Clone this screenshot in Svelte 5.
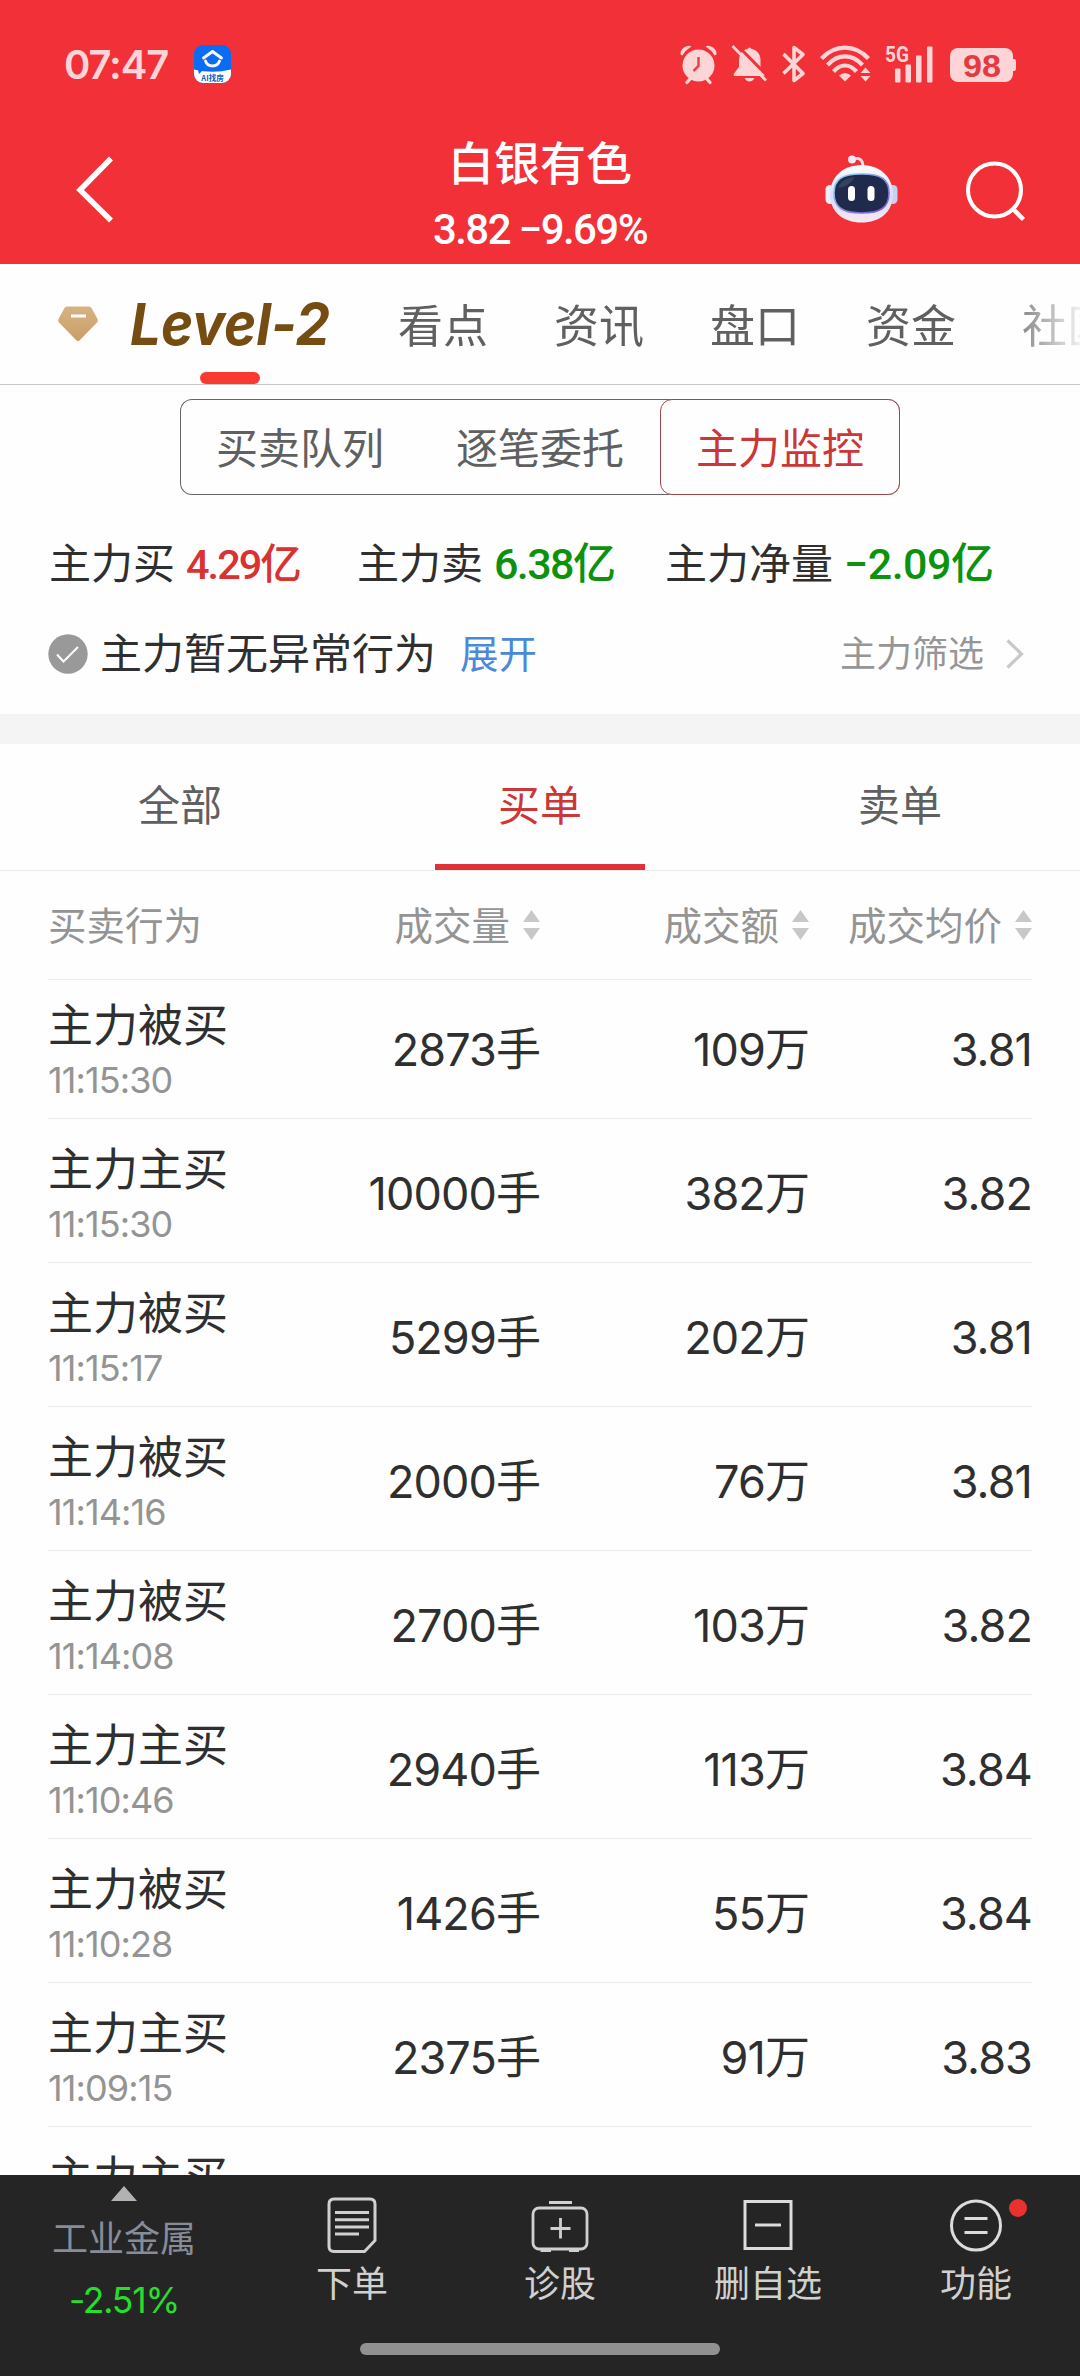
<script lang="ts">
  // Level-2 main force monitor for a single stock
  const quote = { name: '白银有色', price: '3.82', change: '−9.69%' };

  const navTabs = ['看点', '资讯', '盘口', '资金', '社区'];
  const segments = ['买卖队列', '逐笔委托', '主力监控'];
  const orderTabs = ['全部', '买单', '卖单'];

  const stats = [
    { label: '主力买', value: '4.29亿', cls: 'up' },
    { label: '主力卖', value: '6.38亿', cls: 'down' },
    { label: '主力净量', value: '−2.09亿', cls: 'down net' }
  ];

  const columns = ['成交量', '成交额', '成交均价'];

  const rows = [
    { action: '主力被买', time: '11:15:30', volume: '2873手', amount: '109万', price: '3.81' },
    { action: '主力主买', time: '11:15:30', volume: '10000手', amount: '382万', price: '3.82' },
    { action: '主力被买', time: '11:15:17', volume: '5299手', amount: '202万', price: '3.81' },
    { action: '主力被买', time: '11:14:16', volume: '2000手', amount: '76万', price: '3.81' },
    { action: '主力被买', time: '11:14:08', volume: '2700手', amount: '103万', price: '3.82' },
    { action: '主力主买', time: '11:10:46', volume: '2940手', amount: '113万', price: '3.84' },
    { action: '主力被买', time: '11:10:28', volume: '1426手', amount: '55万', price: '3.84' },
    { action: '主力主买', time: '11:09:15', volume: '2375手', amount: '91万', price: '3.83' },
    { action: '主力主买', time: '', volume: '', amount: '', price: '' }
  ];

  let segment = $state(2);
  let orderTab = $state(1);
</script>

<div class="page">
  <header>
    <div class="status">
      <span class="clock">07:47</span>
      <svg class="app" width="37" height="38" viewBox="0 0 37 38">
        <clipPath id="appClip"><rect width="37" height="38" rx="9" /></clipPath>
        <g clip-path="url(#appClip)">
          <rect width="37" height="38" fill="#0a6cf5" />
          <path d="M0 24.5 Q18.5 29 37 24.5 V38 H0Z" fill="#fff" />
          <path d="M4 25 h5 l-4 4z" fill="#0a6cf5" />
          <path d="M9.5 13 L18.5 6.5 L27.5 13" fill="none" stroke="#fff" stroke-width="2.8" stroke-linecap="round" stroke-linejoin="round" />
          <path d="M11.5 16 A7.4 7.4 0 0 0 25.5 16" fill="none" stroke="#fff" stroke-width="2.8" stroke-linecap="round" />
          <text x="18.5" y="35.5" text-anchor="middle" font-size="7.5" font-weight="700" fill="#0a5cc0">AI找房</text>
        </g>
      </svg>
      <div class="sys">
        <!-- alarm -->
        <svg width="38" height="38" viewBox="0 0 38 38">
          <g fill="#fdd5d7">
            <path d="M0.5 9.5 Q0 5.5 4 2.5 Q8 -0.5 11.5 1.5 Q5.5 5 2.5 10.5Z" />
            <path d="M36.5 9.5 Q37 5.5 33 2.5 Q29 -0.5 25.5 1.5 Q31.5 5 34.5 10.5Z" />
            <circle cx="18.5" cy="20.5" r="16" />
          </g>
          <path d="M10 34 L7 37.5 M27 34 L30 37.5" stroke="#fdd5d7" stroke-width="3.4" stroke-linecap="round" />
          <path d="M18.5 12 V21 L13.5 26" fill="none" stroke="#e9434a" stroke-width="2.5" />
        </svg>
        <!-- muted bell -->
        <svg width="36" height="38" viewBox="0 0 36 38">
          <path d="M7 16 C7 9 10 5 15.5 4 Q17.5 1 19.5 4 C25 5 28.5 9 28.5 15 V22 L33 29 Q33.5 31 31 31 H3 Q1 31 2 28.5 L7 22Z" fill="#fdd5d7" />
          <path d="M12.5 33 H22.5 Q20.5 36.5 17.5 36.5 T12.5 33Z" fill="#fdd5d7" />
          <path d="M3.5 -1.5 L38 33.5" stroke="#f13037" stroke-width="3" />
          <path d="M0.5 1 L34 35.5" stroke="#fdd5d7" stroke-width="2.8" />
        </svg>
        <!-- bluetooth -->
        <svg width="24" height="38" viewBox="0 0 24 38">
          <path d="M1.5 9 L21 28.5 L12 35.5 V2.5 L21 9.5 L1.5 28.5" fill="none" stroke="#fdd5d7" stroke-width="3.6" stroke-linejoin="round" />
        </svg>
        <!-- wifi -->
        <svg width="52" height="38" viewBox="0 0 52 38">
          <g fill="none" stroke="#fdd5d7" stroke-width="4.2">
            <path d="M1.5 13.5 C15 -1 35 -1 48.5 13.5" />
            <path d="M7.5 20 C18 8.5 32 8.5 42.5 20" />
            <path d="M13.5 26.5 C20.5 18.5 29.5 18.5 36.5 26.5" />
          </g>
          <path d="M19 30.5 Q25 25.5 31 30.5 L25 36.5Z" fill="#fdd5d7" />
          <path d="M40.5 28 L45.5 22.5 L50.5 28Z M40.5 31 L45.5 36.5 L50.5 31Z" fill="#fdd5d7" />
        </svg>
        <!-- mobile signal -->
        <svg width="50" height="38" viewBox="0 0 50 38">
          <text x="-1" y="16.5" font-size="22.5" font-weight="700" textLength="24" lengthAdjust="spacingAndGlyphs" fill="#fdd5d7" font-family="Roboto, sans-serif">5G</text>
          <g fill="#fdd5d7">
            <rect x="9" y="23.5" width="5.5" height="14" rx="1" />
            <rect x="19.5" y="19.5" width="5.5" height="18" rx="1" />
            <rect x="30" y="10.5" width="5.5" height="27" rx="1" />
            <rect x="41" y="1.5" width="5.5" height="36" rx="1" />
          </g>
        </svg>
        <!-- battery -->
        <svg width="66" height="38" viewBox="0 0 66 38">
          <rect y="3" width="63" height="34" rx="8" fill="#fdd5d7" />
          <path d="M63 14 h1 q2 0 2 2 v8 q0 2 -2 2 h-1z" fill="#fdd5d7" />
          <text x="32" y="31.5" text-anchor="middle" font-size="32" font-weight="700" textLength="38" lengthAdjust="spacingAndGlyphs" fill="#e23c42" font-family="'Liberation Sans', sans-serif">98</text>
        </svg>
      </div>
    </div>

    <div class="nav">
      <svg class="back" width="40" height="72" viewBox="0 0 40 72">
        <path d="M36 5.5 L5 37 L36 67.5" fill="none" stroke="#fff" stroke-width="5.5" />
      </svg>
      <div class="title">
        <div class="name">{quote.name}</div>
        <div class="price">{quote.price} {quote.change}</div>
      </div>
      <div class="tools">
        <!-- assistant robot -->
        <svg width="73" height="68" viewBox="0 0 73 68">
          <defs>
            <linearGradient id="shell" x1="0" y1="0" x2="0" y2="1">
              <stop offset="0" stop-color="#ffffff" />
              <stop offset="0.55" stop-color="#d6dcf8" />
              <stop offset="1" stop-color="#f7e8f4" />
            </linearGradient>
            <linearGradient id="rim" x1="0" y1="0" x2="1" y2="1">
              <stop offset="0" stop-color="#8fdcf0" />
              <stop offset="1" stop-color="#7a4fd0" />
            </linearGradient>
          </defs>
          <path d="M27 4 Q38 1 38 12" fill="none" stroke="#f6dfea" stroke-width="2.8" />
          <circle cx="27" cy="4.5" r="4" fill="#f8e6f0" />
          <rect x="0.5" y="30" width="9" height="19" rx="4.5" fill="#f2edfb" />
          <rect x="63.5" y="30" width="9" height="19" rx="4.5" fill="#cbd0f0" />
          <path d="M36.5 10 C57 10 68 24 68 39 C68 57 55 67.5 36.5 67.5 C18 67.5 5 57 5 39 C5 24 16 10 36.5 10Z" fill="url(#shell)" />
          <path d="M36.5 19 C56 19 64 24 64 38 C64 52 56 58 36.5 58 C17 58 9 52 9 38 C9 24 17 19 36.5 19Z" fill="#1f2a4d" stroke="url(#rim)" stroke-width="1.6" />
          <path d="M13 33 Q16 23 30 22 Q24 32 13 33Z" fill="#46506e" opacity="0.6" />
          <rect x="23" y="31" width="7" height="15" rx="3.5" fill="#fff" />
          <rect x="42.5" y="31" width="7" height="15" rx="3.5" fill="#fff" />
        </svg>
        <svg width="62" height="62" viewBox="0 0 62 62">
          <circle cx="29.5" cy="30" r="26.5" fill="none" stroke="#fff" stroke-width="4" />
          <path d="M48 49 L58.5 59.5" stroke="#fff" stroke-width="4.5" />
        </svg>
      </div>
    </div>
  </header>

  <nav class="tabs">
    <svg class="gem" width="40" height="36" viewBox="0 0 40 36">
      <defs>
        <linearGradient id="gold" x1="0" y1="0" x2="0" y2="1">
          <stop offset="0" stop-color="#d6b283" />
          <stop offset="1" stop-color="#c99f66" />
        </linearGradient>
      </defs>
      <path d="M9 0.5 H31 Q32.5 0.5 33.5 2 L39.5 13 Q40.5 15 39 16.5 L21.5 34.5 Q20 36 18.5 34.5 L1 16.5 Q-0.5 15 0.5 13 L6.5 2 Q7.5 0.5 9 0.5Z" fill="url(#gold)" />
      <rect x="13" y="8.5" width="15" height="3" fill="#fff" />
    </svg>
    <div class="level">
      <svg width="200" height="60" viewBox="0 0 200 60">
        <text x="0" y="50.5" font-family="Inter, sans-serif" font-size="58" font-weight="700" font-style="italic" textLength="200" lengthAdjust="spacingAndGlyphs" fill="#754c12">Level-2</text>
      </svg>
      <span class="mark"></span>
    </div>
    <div class="links">
      {#each navTabs as t}
        <span>{t}</span>
      {/each}
    </div>
  </nav>

  <section class="summary">
    <div class="seg">
      {#each segments as s, i}
        <button class:active={segment === i} onclick={() => (segment = i)}>{s}</button>
      {/each}
    </div>
    <div class="stats">
      {#each stats as s}
        <div>{s.label}<b class={s.cls}>{s.value}</b></div>
      {/each}
    </div>
    <div class="notice">
      <svg width="40" height="40" viewBox="0 0 40 40">
        <circle cx="20" cy="20" r="19.7" fill="#999" />
        <path d="M9 20.5 L15.5 27.5 L30 13" fill="none" stroke="#fff" stroke-width="2" />
      </svg>
      <span class="msg">主力暂无异常行为</span>
      <a href="#expand">展开</a>
      <span class="filter">主力筛选</span>
      <svg width="18" height="30" viewBox="0 0 18 30">
        <path d="M1.5 1.5 L15.5 15 L1.5 28.5" fill="none" stroke="#c8c8c8" stroke-width="3.2" />
      </svg>
    </div>
  </section>

  <div class="order-tabs">
    {#each orderTabs as t, i}
      <button class:active={orderTab === i} onclick={() => (orderTab = i)}>{t}</button>
    {/each}
  </div>

  <div class="thead grid">
    <span class="label">买卖行为</span>
    {#each columns as c}
      <span class="num">
        <span class="label">{c}</span>
        <svg width="17" height="30" viewBox="0 0 17 30">
          <path d="M8.5 0 L17 12 H0Z M8.5 30 L17 18 H0Z" fill="#c8c8c8" />
        </svg>
      </span>
    {/each}
  </div>

  <div class="list">
    {#each rows as r}
      <div class="row grid">
        <div>
          <div class="action">{r.action}</div>
          <div class="time">{r.time}</div>
        </div>
        <span class="num">{r.volume}</span>
        <span class="num">{r.amount}</span>
        <span class="num">{r.price}</span>
      </div>
    {/each}
  </div>

  <footer>
    <div class="actions">
      <div class="sector">
        <svg width="26" height="15" viewBox="0 0 26 15"><path d="M13 0 L26 15 H0Z" fill="#b2b2b2" /></svg>
        <span class="sector-name">工业金属</span>
        <span class="sector-pct">-2.51%</span>
      </div>
      <div class="item">
        <svg width="60" height="60" viewBox="0 0 60 60" fill="none" stroke="#d0d0d0" stroke-width="3">
          <path d="M12 4 H48 Q53 4 53 9 V45.5 L42.5 56.5 H12 Q7 56.5 7 51.5 V9 Q7 4 12 4Z" />
          <path d="M13 17.5 H47 M13 24.7 H47 M13 32 H47 M13 39 H37" />
        </svg>
        <span>下单</span>
      </div>
      <div class="item">
        <svg width="60" height="60" viewBox="0 0 60 60" fill="none" stroke="#d0d0d0" stroke-width="2.8">
          <rect x="3" y="13" width="54" height="41" rx="6" />
          <path d="M19 7.5 H42 M30.5 23 V43.5 M20.5 33.5 H40.5 M10.5 55.5 H21 M39 55.5 H49" />
        </svg>
        <span>诊股</span>
      </div>
      <div class="item">
        <svg width="60" height="60" viewBox="0 0 60 60" fill="none" stroke="#dcdcdc" stroke-width="3">
          <rect x="7" y="6.5" width="46" height="47" />
          <path d="M17 30 H43" />
        </svg>
        <span>删自选</span>
      </div>
      <div class="item">
        <svg width="60" height="60" viewBox="0 0 60 60" fill="none" stroke="#dcdcdc" stroke-width="3">
          <circle cx="30" cy="30.5" r="24.5" />
          <path d="M18.5 23.5 H41.5 M18.5 37.5 H41.5" />
        </svg>
        <i class="dot"></i>
        <span>功能</span>
      </div>
    </div>
    <div class="home"></div>
  </footer>
</div>

<style>
  :global(body) { margin: 0; background: #fff; }
  .page {
    width: 1080px;
    height: 2376px;
    display: flex;
    flex-direction: column;
    overflow: hidden;
    background: #fefefe;
    color: #2f2f2f;
    font-family: Inter, "Noto Sans CJK SC", sans-serif;
    font-weight: 400;
  }
  button {
    border: 0;
    padding: 0;
    background: none;
    font: inherit;
    color: inherit;
  }
  svg { display: block; flex: none; overflow: visible; }

  header {
    height: 264px;
    background: #f13037;
    color: #fff;
  }
  .status {
    height: 128px;
    display: flex;
    align-items: center;
    padding: 0 64px;
  }
  .clock {
    width: 130px;
    font-size: 40px;
    font-weight: 600;
    letter-spacing: -1.1px;
    color: #fdd5d7;
  }
  .app { font-family: "Noto Sans CJK SC", sans-serif; }
  .sys {
    margin-left: auto;
    display: flex;
    gap: 14px;
  }
  .nav {
    height: 136px;
    display: grid;
    grid-template-columns: 1fr auto 1fr;
  }
  .back { margin: 25px 0 0 75px; }
  .title { text-align: center; padding-top: 5px; }
  .name { font-size: 46px; line-height: 60px; font-weight: 500; }
  .price {
    margin-top: 9px;
    font-family: Roboto, sans-serif;
    font-size: 42px;
    line-height: 56px;
    font-weight: 500;
    letter-spacing: -1.6px;
  }
  .tools {
    display: flex;
    justify-content: flex-end;
    align-items: flex-start;
    gap: 67px;
    padding: 27px 53px 0 0;
  }
  .tools svg:last-child { margin-top: 5px; }

  .tabs {
    height: 120px;
    display: flex;
    align-items: center;
    border-bottom: 1px solid #c8c8c8;
  }
  .gem { margin-left: 58px; }
  .level {
    position: relative;
    margin-left: 32px;
    width: 200px;
  }
  .mark {
    position: absolute;
    left: 70px;
    bottom: -30px;
    width: 60px;
    height: 12px;
    border-radius: 6px;
    background: #fa3a30;
  }
  .links {
    display: flex;
    flex: 1;
    gap: 66px;
    margin-left: 68px;
    padding-top: 5px;
    overflow: hidden;
    white-space: nowrap;
    font-size: 45px;
    line-height: 60px;
    color: #606060;
    -webkit-mask-image: linear-gradient(to right, #000 600px, transparent 690px);
    mask-image: linear-gradient(to right, #000 600px, transparent 690px);
  }

  .summary {
    height: 329px;
    border-bottom: 30px solid #f4f4f4;
  }
  .seg {
    box-sizing: border-box;
    width: 720px;
    height: 96px;
    margin: 14px auto 0;
    display: grid;
    grid-template-columns: repeat(3, 1fr);
    border-radius: 12px;
    box-shadow: inset 0 0 0 1px #666;
    font-size: 42px;
    color: #606060;
  }
  .seg button { padding-bottom: 3px; }
  .seg .active {
    border: 1px solid #a04848;
    border-radius: 12px;
    background: #fefefe;
    color: #cc3636;
  }
  .stats {
    display: grid;
    grid-template-columns: 308px 308px 1fr;
    padding: 39px 0 0 49px;
    font-size: 42px;
    line-height: 60px;
  }
  .stats b {
    margin-left: 11px;
    font-family: Roboto, "Noto Sans CJK SC", sans-serif;
    font-size: 43px;
    font-weight: 500;
    letter-spacing: -1.6px;
  }
  .stats .up { font-size: 41.5px; letter-spacing: -2px; color: #d93232; }
  .stats .down { color: #0c920c; }
  .stats .net { letter-spacing: -0.5px; }
  .notice {
    display: flex;
    align-items: center;
    height: 60px;
    margin-top: 29px;
    padding: 0 56px 0 48px;
    font-size: 42px;
    line-height: 58px;
  }
  .msg { margin-left: 12px; padding-bottom: 1px; }
  .notice a {
    margin-left: 24px;
    padding-bottom: 1px;
    font-size: 38.5px;
    color: #4a88d8;
    text-decoration: none;
  }
  .filter {
    margin: 0 22px 0 auto;
    font-size: 36px;
    color: #969696;
  }

  .order-tabs {
    height: 126px;
    display: grid;
    grid-template-columns: repeat(3, 1fr);
    justify-items: center;
    border-bottom: 1px solid #ececec;
  }
  .order-tabs button {
    width: 210px;
    padding-bottom: 3px;
    border-bottom: 6px solid transparent;
    font-size: 42px;
    color: #606060;
  }
  .order-tabs .active { color: #cc3636; border-color: #e03236; }

  .grid {
    display: grid;
    grid-template-columns: 220px 272px 269px 223px;
    align-items: center;
    margin: 0 48px;
    border-bottom: 1px solid #ececec;
  }
  .num { text-align: right; }
  .thead {
    height: 108px;
    font-size: 38.5px;
    line-height: 54px;
    color: #949494;
  }
  .thead .num {
    display: flex;
    justify-content: flex-end;
    align-items: center;
    gap: 13px;
    white-space: nowrap;
  }
  .label { padding-top: 2px; }
  .list {
    flex: 1;
    min-height: 0;
    overflow: hidden;
    margin-top: -5px;
  }
  .row { height: 143px; }
  .row .num {
    padding-top: 6px;
    font-size: 45px;
    line-height: 60px;
    letter-spacing: -0.9px;
  }
  .action { padding-top: 6px; font-size: 45px; line-height: 60px; }
  .time {
    height: 48px;
    line-height: 48px;
    font-size: 36px;
    color: #949494;
    letter-spacing: -0.9px;
  }

  footer {
    position: relative;
    flex: none;
    height: 201px;
    background: #252525;
    color: #d0d0d0;
  }
  .actions {
    display: grid;
    grid-template-columns: 248px repeat(4, 208px);
    font-size: 36px;
  }
  .sector, .item {
    display: flex;
    flex-direction: column;
    align-items: center;
  }
  .sector { padding-top: 11px; }
  .sector-name { margin-top: 13px; line-height: 50px; color: #888c99; }
  .sector-pct {
    margin-top: 12px;
    font-size: 35.5px;
    line-height: 50px;
    letter-spacing: -1.2px;
    color: #22e02b;
  }
  .item {
    position: relative;
    padding-top: 20px;
  }
  .item span { line-height: 50px; margin-top: 4px; }
  .dot {
    position: absolute;
    top: 24px;
    left: 137px;
    width: 18px;
    height: 18px;
    border-radius: 50%;
    background: #ea3131;
  }
  .home {
    position: absolute;
    left: 360px;
    bottom: 21px;
    width: 360px;
    height: 12px;
    border-radius: 6px;
    background: #919191;
  }
</style>
